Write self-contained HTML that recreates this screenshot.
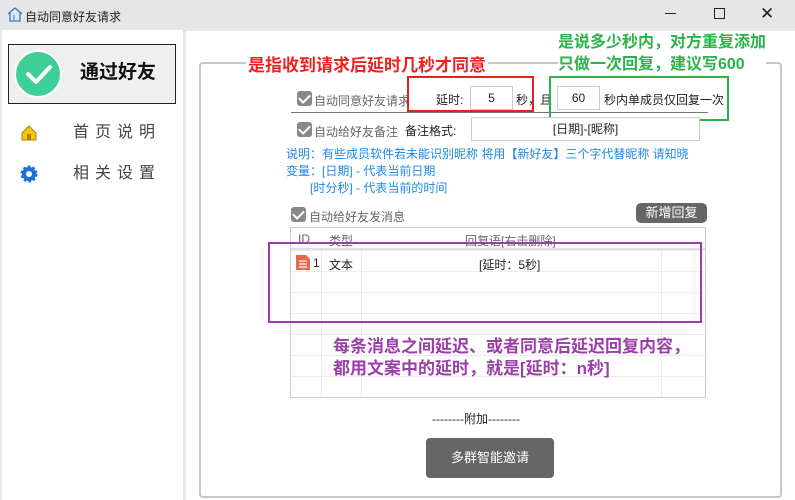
<!DOCTYPE html>
<html><head><meta charset="utf-8"><style>
*{margin:0;padding:0;box-sizing:border-box}
body{width:795px;height:500px;overflow:hidden;background:#e8e8e8;font-family:"Liberation Sans","Noto Sans CJK SC",sans-serif;font-size:12px;color:#333;position:relative}
.a{position:absolute;white-space:nowrap}
.cb{position:absolute;width:15px;height:15px;background:#888;border-radius:3px}
.cb:after{content:"";position:absolute;left:4px;top:1px;width:5px;height:9px;border:solid #fff;border-width:0 2px 2px 0;transform:rotate(45deg)}
.inp{position:absolute;background:#fff;border:1px solid #ccc;text-align:center;color:#222}
.blue{color:#1e88e5}
.red{color:#f02020;font-weight:bold;font-size:17px;text-shadow:0 0 2px #fff,0 0 2px #fff}
.green{color:#2db24a;font-weight:bold;font-size:16px;line-height:22px}
.purple{color:#9a3fa8;font-weight:bold;font-size:17px;line-height:22px}
</style></head><body>
<div class="a" style="left:0;top:0;width:795px;height:30px;background:#e6e6e6"></div>
<svg class="a" style="left:6px;top:6px" width="18" height="16"><path d="M2 8 L9 2 L16 8 M4 7 V15 H14 V7" fill="none" stroke="#2a7bd8" stroke-width="1.3"/><path d="M8 9 V14" stroke="#2a7bd8"/></svg>
<div class="a" style="left:25px;top:8px;font-size:12px;color:#222">自动同意好友请求</div>
<div class="a" style="left:665px;top:13px;width:11px;height:1px;background:#222"></div>
<div class="a" style="left:714px;top:8px;width:11px;height:11px;border:1px solid #222"></div>
<div class="a" style="left:760px;top:4px;font-size:17px;color:#222">✕</div>
<div class="a" style="left:2px;top:30px;width:181px;height:470px;background:#fff"></div>
<div class="a" style="left:186px;top:31px;width:609px;height:469px;background:#fff"></div>
<div class="a" style="left:8px;top:44px;width:168px;height:60px;background:#efefef;border:1px solid #222"></div>
<div class="a" style="left:14px;top:50px;width:48px;height:48px;border-radius:50%;background:#3ecf96;border:2px solid #fff"></div>
<svg class="a" style="left:24px;top:60px" width="30" height="28"><path d="M4 14 L12 22 L26 7" fill="none" stroke="#fff" stroke-width="4" stroke-linecap="round" stroke-linejoin="round"/></svg>
<div class="a" style="left:80px;top:63px;font-size:19px;font-weight:bold;color:#111;line-height:1">通过好友</div>
<svg class="a" style="left:20px;top:124px" width="18" height="18"><path d="M2 9 L9 2 L16 9 V16 H2Z" fill="#f5c518" stroke="#b08000"/><rect x="7" y="10" width="4" height="6" fill="#b08000"/></svg>
<div class="a" style="left:73px;top:125px;font-size:16px;letter-spacing:6px;color:#444;line-height:1">首页说明</div>
<svg class="a" style="left:20px;top:165px" width="18" height="18"><circle cx="9" cy="9" r="7" fill="#1e6fd9"/><circle cx="9" cy="9" r="7" fill="none" stroke="#1e6fd9" stroke-width="3" stroke-dasharray="2.5 2"/><circle cx="9" cy="9" r="3" fill="#fff"/></svg>
<div class="a" style="left:73px;top:166px;font-size:16px;letter-spacing:6px;color:#444;line-height:1">相关设置</div>
<div class="a" style="left:199px;top:62px;width:583px;height:436px;border:2px solid #c8c8c8;border-radius:4px"></div>
<div class="red a" style="left:246px;top:51px;background:#fff;padding:0 2px">是指收到请求后延时几秒才同意</div>
<div class="green a" style="left:558px;top:32px;background:#fff">是说多少秒内，对方重复添加<br>只做一次回复，建议写600</div>
<div class="cb" style="left:297px;top:91px"></div>
<div class="a" style="left:314px;top:92px;color:#666">自动同意好友请求</div>
<div class="a" style="left:407px;top:76px;width:127px;height:36px;border:2px solid #e82020"></div>
<div class="a" style="left:436px;top:91px;color:#222">延时:</div>
<div class="inp" style="left:470px;top:86px;width:43px;height:24px;line-height:22px">5</div>
<div class="a" style="left:516px;top:91px;color:#222">秒，且</div>
<div class="a" style="left:549px;top:76px;width:180px;height:45px;border:2px solid #2db24a"></div>
<div class="inp" style="left:557px;top:86px;width:43px;height:24px;line-height:22px">60</div>
<div class="a" style="left:604px;top:91px;color:#222">秒内单成员仅回复一次</div>
<div class="a" style="left:291px;top:112px;width:417px;height:1px;background:#777"></div>
<div class="cb" style="left:297px;top:122px"></div>
<div class="a" style="left:314px;top:123px;color:#666">自动给好友备注</div>
<div class="a" style="left:405px;top:122px;color:#222">备注格式:</div>
<div class="inp" style="left:471px;top:117px;width:229px;height:24px;line-height:22px">[日期]-[昵称]</div>
<div class="a blue" style="left:286px;top:145px">说明：有些成员软件若未能识别昵称 将用【新好友】三个字代替昵称 请知晓</div>
<div class="a blue" style="left:286px;top:162px">变量：[日期] - 代表当前日期</div>
<div class="a blue" style="left:310px;top:179px">[时分秒] - 代表当前的时间</div>
<div class="cb" style="left:291px;top:207px"></div>
<div class="a" style="left:309px;top:208px;color:#666">自动给好友发消息</div>
<div class="a" style="left:636px;top:203px;width:71px;height:20px;background:#666;border-radius:5px;color:#fff;text-align:center;line-height:20px;font-size:13px">新增回复</div>
<div class="a" style="left:290px;top:227px;width:416px;height:171px;border:1px solid #ccc;background:#fff;
background-image:linear-gradient(#ececec 1px,transparent 1px),linear-gradient(90deg,transparent 30px,#ececec 30px,#ececec 31px,transparent 31px,transparent 70px,#ececec 70px,#ececec 71px,transparent 71px,transparent 370px,#ececec 370px,#ececec 371px,transparent 371px);
background-size:100% 21px,100% 100%;background-position:0 1px,0 0"></div>
<div class="a" style="left:291px;top:228px;width:414px;height:22px;background:#fff;border-bottom:2px solid #e0e0e0"></div>
<div class="a" style="left:298px;top:232px;color:#666">ID</div>
<div class="a" style="left:329px;top:232px;color:#666">类型</div>
<div class="a" style="left:465px;top:232px;color:#666">回复语[右击删除]</div>
<svg class="a" style="left:295px;top:254px" width="16" height="17"><path d="M1 1 H11 L15 5 V16 H1Z" fill="#e8694a"/><path d="M4 7 H12 M4 10 H12 M4 13 H12" stroke="#fff" stroke-width="1.2"/></svg>
<div class="a" style="left:313px;top:256px;color:#222">1</div>
<div class="a" style="left:329px;top:256px;color:#222">文本</div>
<div class="a" style="left:479px;top:256px;color:#222">[延时：5秒]</div>
<div class="a" style="left:268px;top:242px;width:434px;height:81px;border:2px solid #9a3fa8"></div>
<div class="purple a" style="left:333px;top:336px">每条消息之间延迟、或者同意后延迟回复内容，<br>都用文案中的延时，就是[延时：n秒]</div>
<div class="a" style="left:432px;top:410px;color:#222">--------附加--------</div>
<div class="a" style="left:426px;top:438px;width:128px;height:40px;background:#666;border-radius:4px;color:#fff;text-align:center;line-height:40px;font-size:13px">多群智能邀请</div>
</body></html>
